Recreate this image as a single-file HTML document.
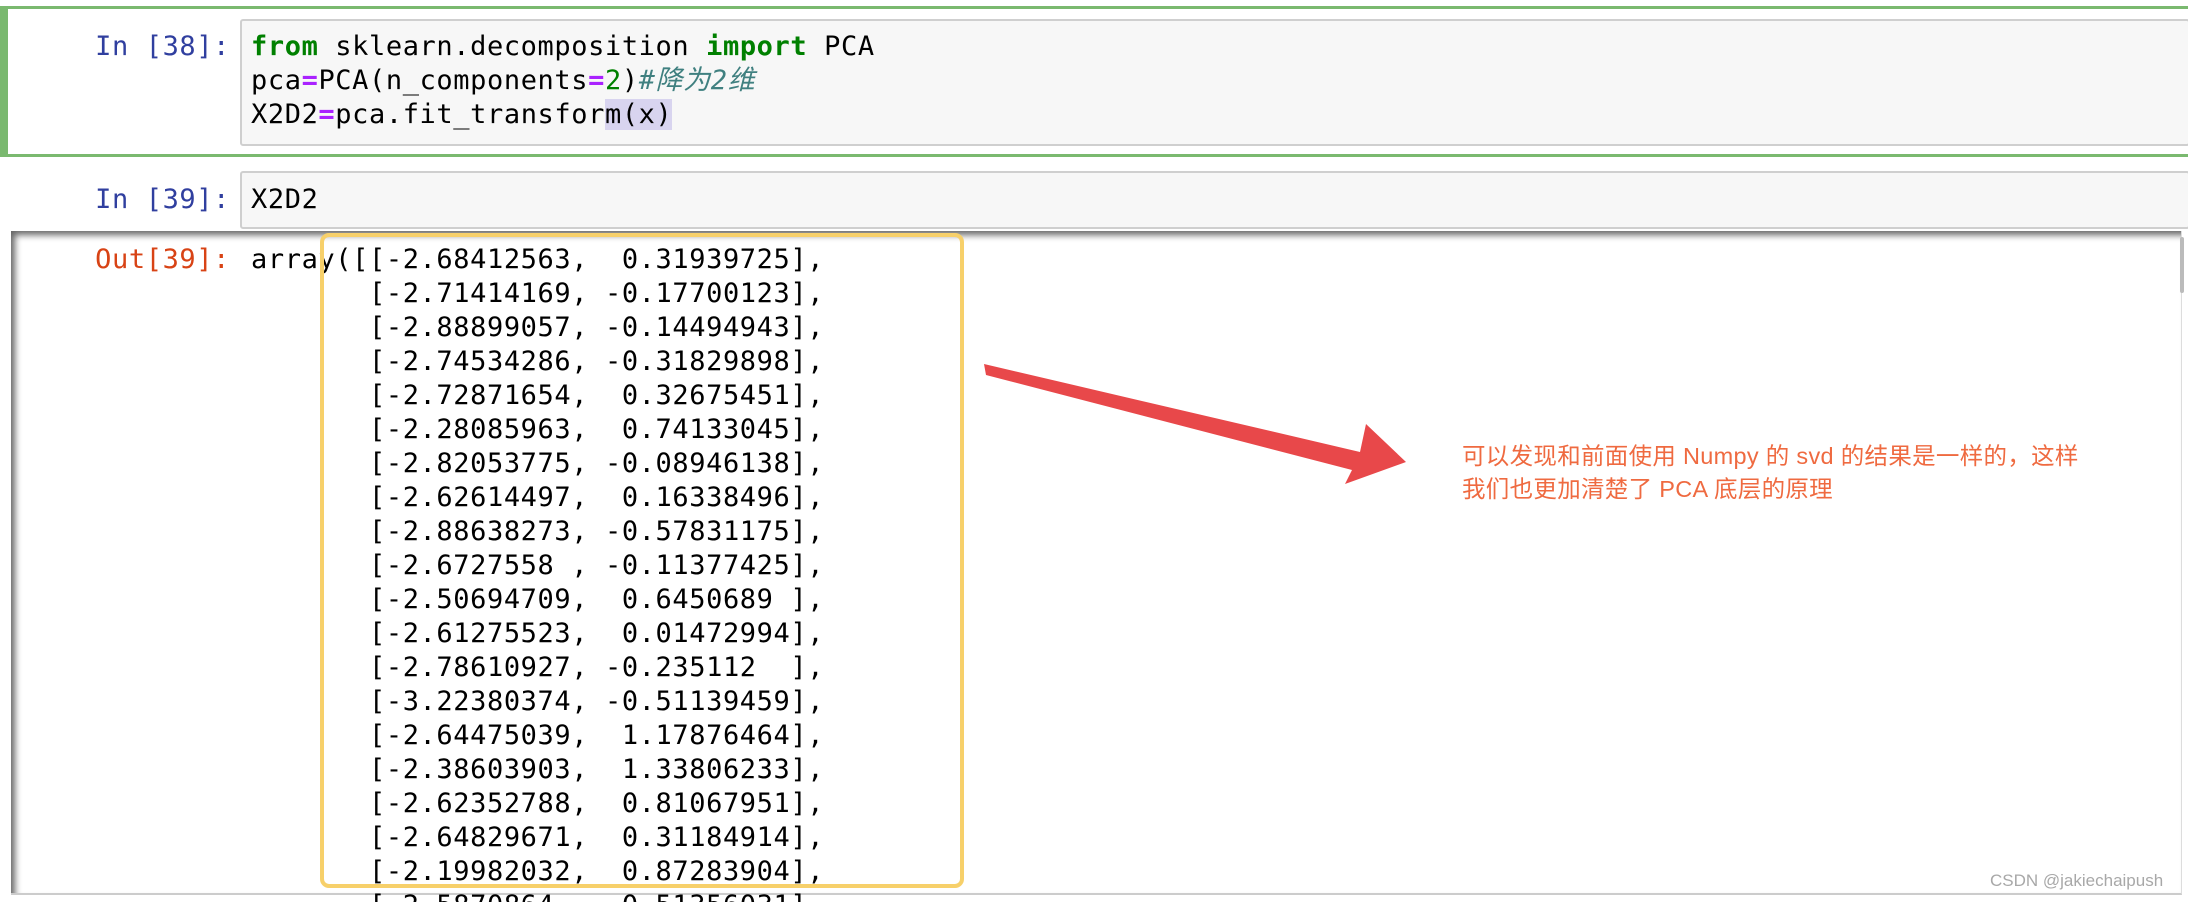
<!DOCTYPE html>
<html><head><meta charset="utf-8"><style>
html,body{margin:0;padding:0;background:#fff;width:2188px;height:902px;overflow:hidden;position:relative}
.mono{font-family:"DejaVu Sans Mono","Liberation Mono","Noto Sans CJK SC",monospace;font-size:27px;line-height:34px;white-space:pre;letter-spacing:0.6px}
.abs{position:absolute}
.prompt{color:#303f9f;text-align:right;width:230px;left:0}
.inbox{background:#f7f7f7;border:2px solid #cfcfcf;border-radius:3px;box-sizing:border-box}
.kw{color:#008000;font-weight:bold}.op{color:#aa22ff;font-weight:bold}.num{color:#008000}.cm{color:#408080;font-style:italic}
</style></head><body>
<div class="abs" style="left:0;top:6px;width:2188px;height:151px;border-top:3px solid #7ab96f;border-bottom:3px solid #7ab96f;border-left:8px solid #7ab96f;box-sizing:border-box"></div>
<div class="abs mono prompt" style="top:30px">In [38]:</div>
<div class="abs inbox" style="left:240px;top:19px;width:1950px;height:127px"></div>
<div class="abs mono" style="left:251px;top:30px"><span class="kw">from</span> sklearn.decomposition <span class="kw">import</span> PCA
pca<span class="op">=</span>PCA(n_components<span class="op">=</span><span class="num">2</span>)<span class="cm">#降为2维</span>
X2D2<span class="op">=</span>pca.fit_transfor<span style="background:#d8d4ef">m(x)</span></div>
<div class="abs mono prompt" style="top:183px">In [39]:</div>
<div class="abs inbox" style="left:240px;top:171px;width:1950px;height:58px"></div>
<div class="abs mono" style="left:251px;top:183px">X2D2</div>
<div class="abs" style="left:11px;top:231px;width:2170px;height:662px;box-shadow:inset 5px 5px 7px -1px rgba(0,0,0,0.6);border-bottom:2px solid #ccc;border-right:1px solid #ddd"></div>
<div class="abs" style="left:2180px;top:237px;width:4px;height:56px;background:#bbb;border-radius:2px"></div>
<div class="abs mono prompt" style="top:243px;color:#d84315">Out[39]:</div>
<div class="abs mono" style="left:251px;top:243px">array([[-2.68412563,  0.31939725],
       [-2.71414169, -0.17700123],
       [-2.88899057, -0.14494943],
       [-2.74534286, -0.31829898],
       [-2.72871654,  0.32675451],
       [-2.28085963,  0.74133045],
       [-2.82053775, -0.08946138],
       [-2.62614497,  0.16338496],
       [-2.88638273, -0.57831175],
       [-2.6727558 , -0.11377425],
       [-2.50694709,  0.6450689 ],
       [-2.61275523,  0.01472994],
       [-2.78610927, -0.235112  ],
       [-3.22380374, -0.51139459],
       [-2.64475039,  1.17876464],
       [-2.38603903,  1.33806233],
       [-2.62352788,  0.81067951],
       [-2.64829671,  0.31184914],
       [-2.19982032,  0.87283904],
       [-2.5870864 , -0.51356031],</div>
<div class="abs" style="left:320px;top:233px;width:644px;height:655px;border:4px solid #f7d06a;border-radius:9px;box-sizing:border-box"></div>
<svg class="abs" style="left:0;top:0" width="2188" height="902"><polygon points="984,364 986,375 1352,470 1345,484 1406,462 1366,424 1360,452" fill="#e8484a"/></svg>
<div class="abs" style="left:1462px;top:440px;font-family:'Liberation Sans','Noto Sans CJK SC',sans-serif;font-size:23.5px;line-height:33px;color:#ef6a40;letter-spacing:0.3px">可以发现和前面使用 Numpy 的 svd 的结果是一样的，这样<br>我们也更加清楚了 PCA 底层的原理</div>
<div class="abs" style="left:1990px;top:871px;font-family:'Liberation Sans','Noto Sans CJK SC',sans-serif;font-size:17px;color:#a8a8a8">CSDN @jakiechaipush</div>
</body></html>
